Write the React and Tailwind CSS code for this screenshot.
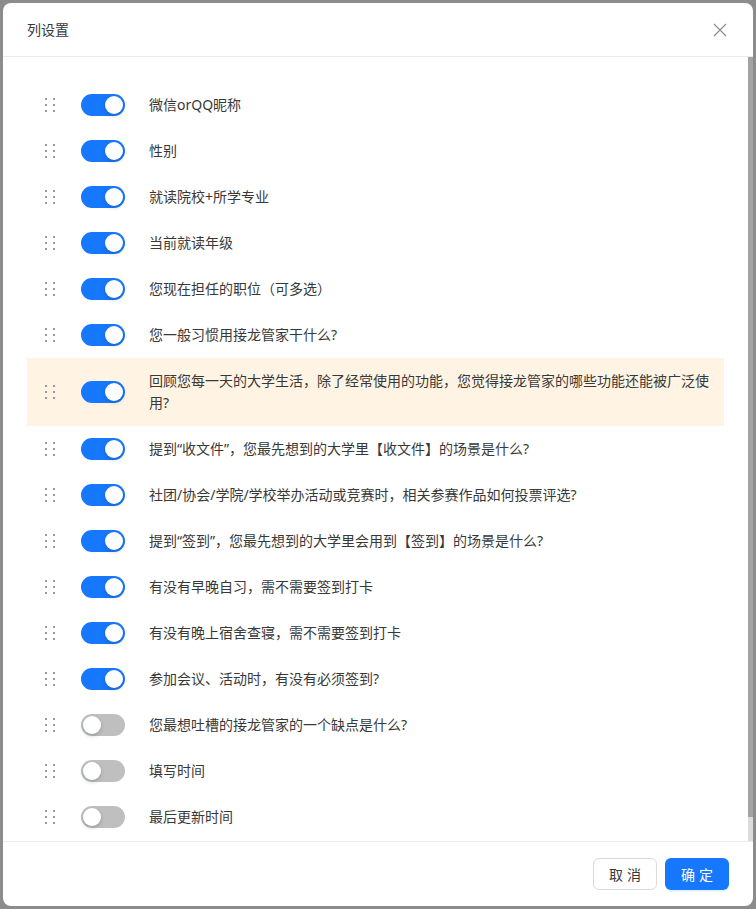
import { useState } from 'react';

const columns = [
  { label: '微信orQQ昵称', on: true },
  { label: '性别', on: true },
  { label: '就读院校+所学专业', on: true },
  { label: '当前就读年级', on: true },
  { label: '您现在担任的职位（可多选）', on: true },
  { label: '您一般习惯用接龙管家干什么?', on: true },
  { label: '回顾您每一天的大学生活，除了经常使用的功能，您觉得接龙管家的哪些功能还能被广泛使用?', on: true, active: true },
  { label: '提到“收文件”，您最先想到的大学里【收文件】的场景是什么?', on: true },
  { label: '社团/协会/学院/学校举办活动或竞赛时，相关参赛作品如何投票评选?', on: true },
  { label: '提到“签到”，您最先想到的大学里会用到【签到】的场景是什么?', on: true },
  { label: '有没有早晚自习，需不需要签到打卡', on: true },
  { label: '有没有晚上宿舍查寝，需不需要签到打卡', on: true },
  { label: '参加会议、活动时，有没有必须签到?', on: true },
  { label: '您最想吐槽的接龙管家的一个缺点是什么?', on: false },
  { label: '填写时间', on: false },
  { label: '最后更新时间', on: false },
];

function DragHandle() {
  return (
    <div className="grid grid-cols-2 gap-x-[6px] gap-y-[4px] w-[10px] shrink-0">
      {[0, 1, 2, 3, 4, 5].map(i => (
        <span key={i} className="block w-[2px] h-[2px] bg-[#999]" />
      ))}
    </div>
  );
}

function Switch({ checked, onChange }) {
  return (
    <button
      onClick={onChange}
      className={`relative block shrink-0 w-[44px] h-[22px] rounded-full transition-colors ${checked ? 'bg-[#1677ff]' : 'bg-[#bfbfbf]'}`}
    >
      <span
        className={`absolute top-[2px] w-[18px] h-[18px] rounded-full bg-white shadow-[0_2px_4px_rgba(0,35,11,0.2)] transition-all ${checked ? 'left-[24px]' : 'left-[2px]'}`}
      />
    </button>
  );
}

export default function App() {
  const [items, setItems] = useState(columns);

  const toggle = idx => setItems(prev => prev.map((c, i) => (i === idx ? { ...c, on: !c.on } : c)));

  return (
    <div className="w-[756px] h-[909px] bg-[#8c8c8c] p-[3px] font-['Noto_Sans','Noto_Sans_CJK_SC',sans-serif] text-[14px] text-[#383838]">
      <div className="w-[750px] h-[903px] bg-white rounded-lg overflow-hidden flex flex-col">
        {/* Header */}
        <div className="flex items-center justify-between h-[54px] px-6 border-b border-[#ebebeb] shrink-0">
          <span className="leading-[22px]">列设置</span>
          <button className="w-[22px] h-[22px] flex items-center justify-center -mr-[2px] text-[#8c8c8c]">
            <svg width="14" height="14" viewBox="0 0 14 14" fill="none" stroke="currentColor" strokeWidth="1.2">
              <path d="M1 1L13 13M13 1L1 13" />
            </svg>
          </button>
        </div>

        {/* Body */}
        <div className="relative flex-1 min-h-0">
          <div className="h-full overflow-y-auto pt-[25px] pb-6 pl-6 pr-[29px] [scrollbar-width:none]">
            {items.map((c, i) => (
              <div
                key={i}
                className={`flex items-center pl-[18px] pr-3 py-3 ${c.active ? 'bg-[#fff4e3]' : ''}`}
              >
                <DragHandle />
                <div className="ml-[26px] flex">
                  <Switch checked={c.on} onChange={() => toggle(i)} />
                </div>
                <span className="ml-6 leading-[22px]">{c.label}</span>
              </div>
            ))}
          </div>
          {/* scrollbar */}
          <div className="absolute right-0 top-0 bottom-0 w-[5px] flex flex-col bg-[#dcdcdc]">
            <div className="h-[760px] w-full shrink-0 bg-[#a3a3a3]" />
          </div>
        </div>

        {/* Footer */}
        <div className="flex justify-end gap-2 px-6 pt-4 pb-4 border-t border-[#ebebeb] shrink-0">
          <button className="h-8 w-[64px] rounded-md border border-[#d9d9d9] bg-white text-[#383838] tracking-[4px] pl-[4px]">
            取消
          </button>
          <button className="h-8 w-[64px] rounded-md bg-[#1677ff] text-white tracking-[4px] pl-[4px] shadow-[0_2px_0_rgba(5,145,255,0.1)]">
            确定
          </button>
        </div>
      </div>
    </div>
  );
}
